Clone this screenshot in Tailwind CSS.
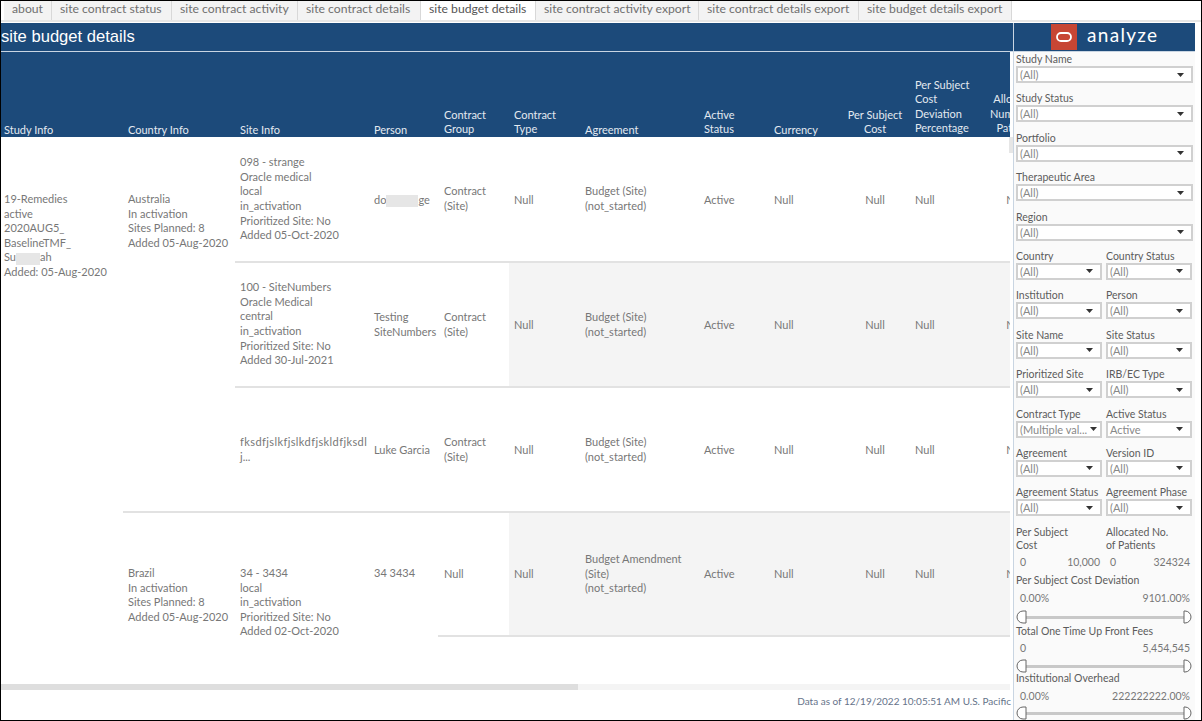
<!DOCTYPE html>
<html>
<head>
  <meta charset="UTF-8" />
  <script src="https://cdn.jsdelivr.net/npm/@tailwindcss/browser@4"></script>
  <title>site budget details</title>
</head>
<body class="bg-white">
<div class="w-[1202px] h-[721px] border border-black flex flex-col overflow-hidden bg-white font-['Lato',sans-serif] text-[11px] leading-[14.6px] text-[#777]">

  <!-- Tabs -->
  <div class="h-[21px] flex items-stretch pl-[3px] text-[12.2px] text-[#707070] border-b-2 border-[#e6e6e6]">
    <div class="w-[48px] pl-[8px] pb-[2px] flex items-center bg-[#f3f3f3] border-r border-[#d8d8d8]">about</div>
    <div class="w-[120px] pl-[8px] pb-[2px] flex items-center bg-[#f3f3f3] border-r border-[#d8d8d8]">site contract status</div>
    <div class="w-[126px] pl-[8px] pb-[2px] flex items-center bg-[#f3f3f3] border-r border-[#d8d8d8]">site contract activity</div>
    <div class="w-[123px] pl-[8px] pb-[2px] flex items-center bg-[#f3f3f3] border-r border-[#d8d8d8]">site contract details</div>
    <div class="w-[115px] pl-[8px] pb-[2px] flex items-center bg-white text-[#555] border-r border-[#d8d8d8]">site budget details</div>
    <div class="w-[163px] pl-[8px] pb-[2px] flex items-center bg-[#f3f3f3] border-r border-[#d8d8d8]">site contract activity export</div>
    <div class="w-[160px] pl-[8px] pb-[2px] flex items-center bg-[#f3f3f3] border-r border-[#d8d8d8]">site contract details export</div>
    <div class="w-[153px] pl-[8px] pb-[2px] flex items-center bg-[#f3f3f3] border-r border-[#d8d8d8]">site budget details export</div>
  </div>

  <div class="flex flex-1 min-h-0 pt-px">
    <!-- Main column -->
    <div class="w-[1012px] flex flex-col">
      <div class="h-[29px] bg-[#1c4a7a] border-b border-[#c9d5e2] flex items-center text-white text-[16.6px] font-['Liberation_Sans',sans-serif]">site budget details</div>

      <div class="relative h-[638px] w-[1012px]">
        <div class="w-[1009px] h-[632px] overflow-hidden">
        <div class="grid grid-cols-[122px_112px_135px_68px_71px_71px_120px_70px_70px_70px_70px_72px] grid-rows-[85px_126px_125px_125px_124px]">
          <!-- Header -->
          <div class="bg-[#1c4a7a] text-[#e3e9f0] flex items-end pl-[3px]"><span class="translate-y-px">Study Info</span></div>
          <div class="bg-[#1c4a7a] text-[#e3e9f0] flex items-end pl-[5px]"><span class="translate-y-px">Country Info</span></div>
          <div class="bg-[#1c4a7a] text-[#e3e9f0] flex items-end pl-[5px]"><span class="translate-y-px">Site Info</span></div>
          <div class="bg-[#1c4a7a] text-[#e3e9f0] flex items-end pl-[4px]"><span class="translate-y-px">Person</span></div>
          <div class="bg-[#1c4a7a] text-[#e3e9f0] flex items-end pl-[6px]">Contract<br />Group</div>
          <div class="bg-[#1c4a7a] text-[#e3e9f0] flex items-end pl-[5px]">Contract<br />Type</div>
          <div class="bg-[#1c4a7a] text-[#e3e9f0] flex items-end pl-[5px]"><span class="translate-y-px">Agreement</span></div>
          <div class="bg-[#1c4a7a] text-[#e3e9f0] flex items-end pl-[4px]">Active<br />Status</div>
          <div class="bg-[#1c4a7a] text-[#e3e9f0] flex items-end pl-[4px]"><span class="translate-y-px">Currency</span></div>
          <div class="bg-[#1c4a7a] text-[#e3e9f0] flex items-end justify-center text-center">Per Subject<br />Cost</div>
          <div class="bg-[#1c4a7a] text-[#e3e9f0] flex items-end pl-[5px] pb-[1px]">Per Subject<br />Cost<br />Deviation<br />Percentage</div>
          <div class="bg-[#1c4a7a] text-[#e3e9f0] flex items-end justify-center text-center pb-[1px]">Allocated<br />Number of<br />Patients</div>

          <!-- Study and country -->
          <div class="row-span-4 pl-[3px] pt-[55px]">19-Remedies<br />active<br />2020AUG5_<br />BaselineTMF_<br />Su<span class="inline-block w-[24px] h-[12px] align-middle bg-[#e6e6e6]"></span>ah<br />Added: 05-Aug-2020</div>
          <div class="row-span-3 pl-[5px] pt-[55px] border-b-2 border-[#e2e2e2]">Australia<br />In activation<br />Sites Planned: 8<br />Added 05-Aug-2020</div>

          <!-- Row 1 -->
          <div class="pl-[5px] flex items-center border-b-2 border-[#e2e2e2]"><div>098 - strange<br />Oracle medical<br />local<br />in_activation<br />Prioritized Site: No<br />Added 05-Oct-2020</div></div>
          <div class="pl-[4px] pt-[2px] flex items-center border-b-2 border-[#e2e2e2]"><div>do<span class="inline-block w-[32px] h-[12px] align-middle bg-[#e6e6e6]"></span>ge</div></div>
          <div class="pl-[6px] flex items-center border-b-2 border-[#e2e2e2]"><div>Contract<br />(Site)</div></div>
          <div class="pl-[5px] pt-[2px] flex items-center border-b-2 border-[#e2e2e2]">Null</div>
          <div class="pl-[5px] flex items-center border-b-2 border-[#e2e2e2]"><div>Budget (Site)<br />(not_started)</div></div>
          <div class="pl-[4px] pt-[2px] flex items-center border-b-2 border-[#e2e2e2]">Active</div>
          <div class="pl-[4px] pt-[2px] flex items-center border-b-2 border-[#e2e2e2]">Null</div>
          <div class="pt-[2px] flex items-center justify-center border-b-2 border-[#e2e2e2]">Null</div>
          <div class="pl-[5px] pt-[2px] flex items-center border-b-2 border-[#e2e2e2]">Null</div>
          <div class="pt-[2px] flex items-center justify-center border-b-2 border-[#e2e2e2]">Null</div>

          <!-- Row 2 -->
          <div class="pl-[5px] pb-[1px] flex items-center border-b-2 border-[#e2e2e2]"><div>100 - SiteNumbers<br />Oracle Medical<br />central<br />in_activation<br />Prioritized Site: No<br />Added 30-Jul-2021</div></div>
          <div class="pl-[4px] flex items-center border-b-2 border-[#e2e2e2]"><div>Testing<br />SiteNumbers</div></div>
          <div class="pl-[6px] flex items-center border-b-2 border-[#e2e2e2]"><div>Contract<br />(Site)</div></div>
          <div class="pl-[5px] pt-[2px] flex items-center bg-[#f4f4f4] border-b-2 border-[#e2e2e2]">Null</div>
          <div class="pl-[5px] flex items-center bg-[#f4f4f4] border-b-2 border-[#e2e2e2]"><div>Budget (Site)<br />(not_started)</div></div>
          <div class="pl-[4px] pt-[2px] flex items-center bg-[#f4f4f4] border-b-2 border-[#e2e2e2]">Active</div>
          <div class="pl-[4px] pt-[2px] flex items-center bg-[#f4f4f4] border-b-2 border-[#e2e2e2]">Null</div>
          <div class="pt-[2px] flex items-center justify-center bg-[#f4f4f4] border-b-2 border-[#e2e2e2]">Null</div>
          <div class="pl-[5px] pt-[2px] flex items-center bg-[#f4f4f4] border-b-2 border-[#e2e2e2]">Null</div>
          <div class="pt-[2px] flex items-center justify-center bg-[#f4f4f4] border-b-2 border-[#e2e2e2]">Null</div>

          <!-- Row 3 -->
          <div class="pl-[5px] flex items-center border-b-2 border-[#e2e2e2]"><div><span class="tracking-[0.4px]">fksdfjslkfjslkdfjskldfjksdl</span><br />j...</div></div>
          <div class="pl-[4px] pt-[2px] flex items-center border-b-2 border-[#e2e2e2]">Luke Garcia</div>
          <div class="pl-[6px] flex items-center border-b-2 border-[#e2e2e2]"><div>Contract<br />(Site)</div></div>
          <div class="pl-[5px] pt-[2px] flex items-center border-b-2 border-[#e2e2e2]">Null</div>
          <div class="pl-[5px] flex items-center border-b-2 border-[#e2e2e2]"><div>Budget (Site)<br />(not_started)</div></div>
          <div class="pl-[4px] pt-[2px] flex items-center border-b-2 border-[#e2e2e2]">Active</div>
          <div class="pl-[4px] pt-[2px] flex items-center border-b-2 border-[#e2e2e2]">Null</div>
          <div class="pt-[2px] flex items-center justify-center border-b-2 border-[#e2e2e2]">Null</div>
          <div class="pl-[5px] pt-[2px] flex items-center border-b-2 border-[#e2e2e2]">Null</div>
          <div class="pt-[2px] flex items-center justify-center border-b-2 border-[#e2e2e2]">Null</div>

          <!-- Row 4 -->
          <div class="pl-[5px] pt-[53px]">Brazil<br />In activation<br />Sites Planned: 8<br />Added 05-Aug-2020</div>
          <div class="pl-[5px] pt-[53px]">34 - 3434<br />local<br />in_activation<br />Prioritized Site: No<br />Added 02-Oct-2020</div>
          <div class="pl-[4px] pt-[53px]">34 3434</div>
          <div class="pl-[6px] pt-[1px] flex items-center border-b-2 border-[#e2e2e2]">Null</div>
          <div class="pl-[5px] pt-[1px] flex items-center bg-[#f4f4f4] border-b-2 border-[#e2e2e2]">Null</div>
          <div class="pl-[5px] flex items-center bg-[#f4f4f4] border-b-2 border-[#e2e2e2]"><div>Budget Amendment<br />(Site)<br />(not_started)</div></div>
          <div class="pl-[4px] pt-[1px] flex items-center bg-[#f4f4f4] border-b-2 border-[#e2e2e2]">Active</div>
          <div class="pl-[4px] pt-[1px] flex items-center bg-[#f4f4f4] border-b-2 border-[#e2e2e2]">Null</div>
          <div class="pt-[1px] flex items-center justify-center bg-[#f4f4f4] border-b-2 border-[#e2e2e2]">Null</div>
          <div class="pl-[5px] pt-[1px] flex items-center bg-[#f4f4f4] border-b-2 border-[#e2e2e2]">Null</div>
          <div class="pt-[1px] flex items-center justify-center bg-[#f4f4f4] border-b-2 border-[#e2e2e2]">Null</div>
        </div>
        </div>

        <!-- Scrollbars -->
        <div class="absolute left-[1008px] top-[85px] w-[4px] h-[16px] bg-[#e6e6e6]"></div>
        <div class="absolute left-0 bottom-0 w-[1009px] h-[6px] bg-[#f4f4f4]"><div class="w-[577px] h-full bg-[#dedede]"></div></div>
      </div>

      <div class="flex-1 flex items-center justify-end w-[1010px] pb-[8px] text-[10px] text-[#66738a]">Data as of 12/19/2022 10:05:51 AM U.S. Pacific</div>
    </div>

    <!-- Filter panel -->
    <div class="w-[182px] flex flex-col border-l border-[#c9d5e2] overflow-hidden">
      <div class="h-[29px] bg-[#1c4a7a] border-b border-[#c9d5e2] flex items-center pl-[37px] gap-[10px]">
        <div class="w-[26px] h-[26px] bg-[#c74634] flex items-center justify-center">
          <svg width="16" height="10" viewBox="0 0 16 10"><rect x="1" y="1" width="14" height="8" rx="4" fill="none" stroke="#fff" stroke-width="1.8" /></svg>
        </div>
        <span class="text-white text-[19px] tracking-[1.3px] leading-none pb-[5px]">analyze</span>
      </div>

      <div class="flex-1 bg-[#fafafa] px-[2px] pt-[1px] text-[#5c5c5c] text-[10.5px] leading-[13px]">
        <div class="h-[39.4px]">Study Name
          <div class="h-[17px] bg-white border-2 border-[#d0d0d0] flex items-center justify-between pl-[2px] pr-[7px] text-[#888] text-[11px] leading-none">(All)<svg width="7" height="4" viewBox="0 0 7 4"><path d="M0 0H7L3.5 4Z" fill="#333" /></svg></div>
        </div>
        <div class="h-[39.4px]">Study Status
          <div class="h-[17px] bg-white border-2 border-[#d0d0d0] flex items-center justify-between pl-[2px] pr-[7px] text-[#888] text-[11px] leading-none">(All)<svg width="7" height="4" viewBox="0 0 7 4"><path d="M0 0H7L3.5 4Z" fill="#333" /></svg></div>
        </div>
        <div class="h-[39.4px]">Portfolio
          <div class="h-[17px] bg-white border-2 border-[#d0d0d0] flex items-center justify-between pl-[2px] pr-[7px] text-[#888] text-[11px] leading-none">(All)<svg width="7" height="4" viewBox="0 0 7 4"><path d="M0 0H7L3.5 4Z" fill="#333" /></svg></div>
        </div>
        <div class="h-[39.4px]">Therapeutic Area
          <div class="h-[17px] bg-white border-2 border-[#d0d0d0] flex items-center justify-between pl-[2px] pr-[7px] text-[#888] text-[11px] leading-none">(All)<svg width="7" height="4" viewBox="0 0 7 4"><path d="M0 0H7L3.5 4Z" fill="#333" /></svg></div>
        </div>
        <div class="h-[39.4px]">Region
          <div class="h-[17px] bg-white border-2 border-[#d0d0d0] flex items-center justify-between pl-[2px] pr-[7px] text-[#888] text-[11px] leading-none">(All)<svg width="7" height="4" viewBox="0 0 7 4"><path d="M0 0H7L3.5 4Z" fill="#333" /></svg></div>
        </div>

        <div class="grid grid-cols-[86px_86px] gap-x-[4px] auto-rows-[39.4px]">
          <div>Country
            <div class="h-[17px] bg-white border-2 border-[#d0d0d0] flex items-center justify-between pl-[2px] pr-[7px] text-[#888] text-[11px] leading-none">(All)<svg width="7" height="4" viewBox="0 0 7 4"><path d="M0 0H7L3.5 4Z" fill="#333" /></svg></div>
          </div>
          <div>Country Status
            <div class="h-[17px] bg-white border-2 border-[#d0d0d0] flex items-center justify-between pl-[2px] pr-[7px] text-[#888] text-[11px] leading-none">(All)<svg width="7" height="4" viewBox="0 0 7 4"><path d="M0 0H7L3.5 4Z" fill="#333" /></svg></div>
          </div>
          <div>Institution
            <div class="h-[17px] bg-white border-2 border-[#d0d0d0] flex items-center justify-between pl-[2px] pr-[7px] text-[#888] text-[11px] leading-none">(All)<svg width="7" height="4" viewBox="0 0 7 4"><path d="M0 0H7L3.5 4Z" fill="#333" /></svg></div>
          </div>
          <div>Person
            <div class="h-[17px] bg-white border-2 border-[#d0d0d0] flex items-center justify-between pl-[2px] pr-[7px] text-[#888] text-[11px] leading-none">(All)<svg width="7" height="4" viewBox="0 0 7 4"><path d="M0 0H7L3.5 4Z" fill="#333" /></svg></div>
          </div>
          <div>Site Name
            <div class="h-[17px] bg-white border-2 border-[#d0d0d0] flex items-center justify-between pl-[2px] pr-[7px] text-[#888] text-[11px] leading-none">(All)<svg width="7" height="4" viewBox="0 0 7 4"><path d="M0 0H7L3.5 4Z" fill="#333" /></svg></div>
          </div>
          <div>Site Status
            <div class="h-[17px] bg-white border-2 border-[#d0d0d0] flex items-center justify-between pl-[2px] pr-[7px] text-[#888] text-[11px] leading-none">(All)<svg width="7" height="4" viewBox="0 0 7 4"><path d="M0 0H7L3.5 4Z" fill="#333" /></svg></div>
          </div>
          <div>Prioritized Site
            <div class="h-[17px] bg-white border-2 border-[#d0d0d0] flex items-center justify-between pl-[2px] pr-[7px] text-[#888] text-[11px] leading-none">(All)<svg width="7" height="4" viewBox="0 0 7 4"><path d="M0 0H7L3.5 4Z" fill="#333" /></svg></div>
          </div>
          <div>IRB/EC Type
            <div class="h-[17px] bg-white border-2 border-[#d0d0d0] flex items-center justify-between pl-[2px] pr-[7px] text-[#888] text-[11px] leading-none">(All)<svg width="7" height="4" viewBox="0 0 7 4"><path d="M0 0H7L3.5 4Z" fill="#333" /></svg></div>
          </div>
          <div>Contract Type
            <div class="h-[17px] bg-white border-2 border-[#d0d0d0] flex items-center justify-between pl-[2px] pr-[3px] text-[#888] text-[11px] leading-none whitespace-nowrap">(Multiple val...<svg class="shrink-0" width="7" height="4" viewBox="0 0 7 4"><path d="M0 0H7L3.5 4Z" fill="#333" /></svg></div>
          </div>
          <div>Active Status
            <div class="h-[17px] bg-white border-2 border-[#d0d0d0] flex items-center justify-between pl-[2px] pr-[7px] text-[#888] text-[11px] leading-none">Active<svg width="7" height="4" viewBox="0 0 7 4"><path d="M0 0H7L3.5 4Z" fill="#333" /></svg></div>
          </div>
          <div>Agreement
            <div class="h-[17px] bg-white border-2 border-[#d0d0d0] flex items-center justify-between pl-[2px] pr-[7px] text-[#888] text-[11px] leading-none">(All)<svg width="7" height="4" viewBox="0 0 7 4"><path d="M0 0H7L3.5 4Z" fill="#333" /></svg></div>
          </div>
          <div>Version ID
            <div class="h-[17px] bg-white border-2 border-[#d0d0d0] flex items-center justify-between pl-[2px] pr-[7px] text-[#888] text-[11px] leading-none">(All)<svg width="7" height="4" viewBox="0 0 7 4"><path d="M0 0H7L3.5 4Z" fill="#333" /></svg></div>
          </div>
          <div class="whitespace-nowrap">Agreement Status
            <div class="h-[17px] bg-white border-2 border-[#d0d0d0] flex items-center justify-between pl-[2px] pr-[7px] text-[#888] text-[11px] leading-none">(All)<svg width="7" height="4" viewBox="0 0 7 4"><path d="M0 0H7L3.5 4Z" fill="#333" /></svg></div>
          </div>
          <div class="whitespace-nowrap">Agreement Phase
            <div class="h-[17px] bg-white border-2 border-[#d0d0d0] flex items-center justify-between pl-[2px] pr-[7px] text-[#888] text-[11px] leading-none">(All)<svg width="7" height="4" viewBox="0 0 7 4"><path d="M0 0H7L3.5 4Z" fill="#333" /></svg></div>
          </div>
        </div>

        <!-- Range filters -->
        <div class="grid grid-cols-[86px_86px] gap-x-[4px] h-[45px]">
          <div><div>Per Subject<br />Cost</div><div class="flex justify-between pl-[4px] pr-[2px] pt-[4px] text-[#777]"><span>0</span><span>10,000</span></div></div>
          <div><div>Allocated No.<br />of Patients</div><div class="flex justify-between pl-[4px] pr-[2px] pt-[4px] text-[#777]"><span>0</span><span>324324</span></div></div>
        </div>
        <div class="h-[54px] pt-[3px] w-[176px]">Per Subject Cost Deviation
          <div class="flex justify-between pl-[4px] pr-[2px] pt-[5px] text-[#777]"><span>0.00%</span><span>9101.00%</span></div>
          <svg class="block mt-[5px]" width="176" height="14" viewBox="0 0 176 14"><rect x="9" y="6" width="160" height="3" fill="#c8c8c8" /><path d="M10 1H7A6 6 0 0 0 7 13H10Z" fill="#fff" stroke="#666" /><path d="M168 1H169A6 6 0 0 1 169 13H168Z" fill="#fff" stroke="#666" /></svg>
        </div>
        <div class="h-[47px] w-[176px]">Total One Time Up Front Fees
          <div class="flex justify-between pl-[4px] pr-[2px] pt-[4px] text-[#777]"><span>0</span><span>5,454,545</span></div>
          <svg class="block mt-[4px]" width="176" height="14" viewBox="0 0 176 14"><rect x="9" y="6" width="160" height="3" fill="#c8c8c8" /><path d="M10 1H7A6 6 0 0 0 7 13H10Z" fill="#fff" stroke="#666" /><path d="M168 1H169A6 6 0 0 1 169 13H168Z" fill="#fff" stroke="#666" /></svg>
        </div>
        <div class="w-[176px]">Institutional Overhead
          <div class="flex justify-between pl-[4px] pr-[2px] pt-[5px] text-[#777]"><span>0.00%</span><span>222222222.00%</span></div>
          <svg class="block mt-[3px]" width="176" height="14" viewBox="0 0 176 14"><rect x="9" y="6" width="160" height="3" fill="#c8c8c8" /><path d="M10 1H7A6 6 0 0 0 7 13H10Z" fill="#fff" stroke="#666" /><path d="M168 1H169A6 6 0 0 1 169 13H168Z" fill="#fff" stroke="#666" /></svg>
        </div>
      </div>
    </div>
  </div>
</div>
</body>
</html>
